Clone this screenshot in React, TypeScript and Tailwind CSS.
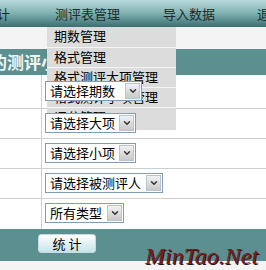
import { ChevronDown } from 'lucide-react'

const cn = '"Noto Sans CJK SC", "Noto Sans", sans-serif'

// menu items under 测评表管理
const menuItems = ['期数管理', '格式管理', '格式测评大项管理', '格式测评小项管理', '评分管理']

function Sel({ label, className }: { label: string; className: string }) {
  return (
    <div
      className={`relative z-20 flex h-[20px] items-stretch border border-[#7f9db9] bg-white ${className}`}
    >
      <span className="flex-1 whitespace-nowrap pl-[4px] text-[13px] leading-[18px] text-black">{label}</span>
      <span className="m-[1px] flex w-[15px] items-center justify-center border border-[#b8c4d0] bg-gradient-to-b from-[#f2f2f2] to-[#c9c9c9]">
        <ChevronDown className="h-[10px] w-[10px] text-[#333]" strokeWidth={3.5} />
      </span>
    </div>
  )
}

export default function App() {
  const rows = [
    { label: '请选择期数', w: 'w-[97px]', h: 'h-[34px]', pt: 'pt-[6px]' },
    { label: '请选择大项', w: 'w-[91px]', h: 'h-[30px]', pt: 'pt-[4px]' },
    { label: '请选择小项', w: 'w-[91px]', h: 'h-[30px]', pt: 'pt-[4px]' },
    { label: '请选择被测评人', w: 'w-[118px]', h: 'h-[30px]', pt: 'pt-[4px]' },
    { label: '所有类型', w: 'w-[79px]', h: 'h-[30px]', pt: 'pt-[4px]' }
  ]

  return (
    <div className="relative h-[270px] w-[266px] overflow-hidden bg-[#f4f4f4]" style={{ fontFamily: cn }}>
      {/* Top nav bar */}
      <div className="flex h-[27px] items-center overflow-hidden whitespace-nowrap bg-gradient-to-b from-[#b9dada] via-[#7eb0b0] to-[#3b6f70] text-[13px] text-[#1c2b2b]">
        <span className="ml-[-3px]">计</span>
        <span className="ml-[45px]">测评表管理</span>
        <span className="ml-[43px]">导入数据</span>
        <span className="ml-[42px]">退出</span>
      </div>

      <div className="h-[22px] bg-[#f4f4f4]" />

      {/* Title band */}
      <div className="flex h-[26px] items-center overflow-hidden whitespace-nowrap bg-[#5b8f90]">
        <span className="ml-[-10px] text-[17px] font-bold text-[#eef6f6]">的测评小项统计</span>
      </div>

      {/* Form table */}
      <div className="bg-white">
        {rows.map((r, i) => (
          <div key={i} className={`flex ${r.h} ${i < 4 ? 'border-b border-[#cfcfcf]' : ''}`}>
            <div className="w-[42px] border-r border-[#cfcfcf]" />
            <div className={`pl-[3px] ${r.pt}`}>
              <Sel label={r.label} className={r.w} />
            </div>
          </div>
        ))}
      </div>

      {/* Submit band */}
      <div className="flex h-[32px] items-start bg-[#5b8f90] pl-[38px] pt-[5px]">
        <button className="h-[19px] w-[58px] rounded-[3px] border border-[#c6dbe0] bg-gradient-to-b from-white to-[#c8e3ea] text-[13px] leading-[16px] text-black">
          统 计
        </button>
      </div>

      {/* Dropdown menu overlay */}
      <div className="absolute left-[47px] top-[27px] z-10 w-[129px] bg-[#dcdcdc] pb-[3px]">
        {menuItems.map((m, i) => (
          <div
            key={m}
            className={`h-[20px] whitespace-nowrap pl-[7px] text-[13px] leading-[17px] text-black ${i > 0 ? 'border-t border-[#f4f4f4]' : ''}`}
          >
            {m}
          </div>
        ))}
      </div>

      {/* Watermark */}
      <div
        className="absolute left-[145px] top-[238px] z-30 text-[24px] italic text-[#7b1c1c] [text-shadow:1px_1px_0_#2a1010]"
        style={{ fontFamily: '"Liberation Serif", serif' }}
      >
        MinTao.Net
      </div>
    </div>
  )
}
